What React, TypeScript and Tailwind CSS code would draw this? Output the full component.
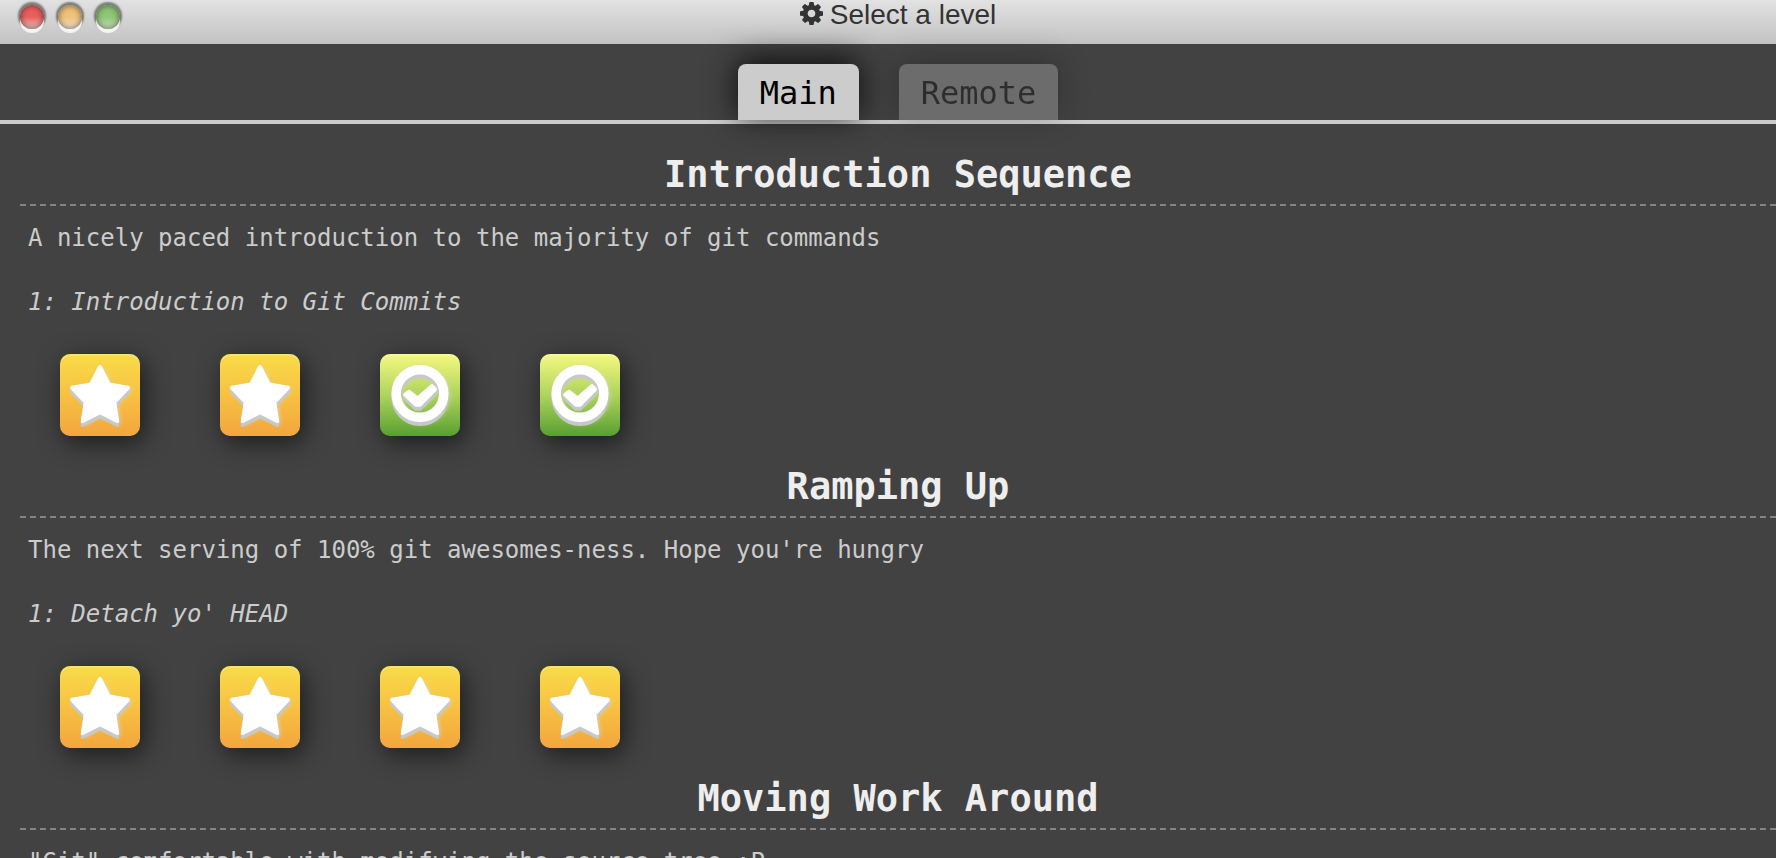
import { useState } from "react";

type Level = { name: string; solved: boolean };
type Sequence = { title: string; about: string; first?: string; levels: Level[] };

const sequences: Sequence[] = [
  {
    title: "Introduction Sequence",
    about: "A nicely paced introduction to the majority of git commands",
    first: "1: Introduction to Git Commits",
    levels: [
      { name: "Level 1", solved: false },
      { name: "Level 2", solved: false },
      { name: "Level 3", solved: true },
      { name: "Level 4", solved: true },
    ],
  },
  {
    title: "Ramping Up",
    about: "The next serving of 100% git awesomes-ness. Hope you're hungry",
    first: "1: Detach yo' HEAD",
    levels: [
      { name: "Level 1", solved: false },
      { name: "Level 2", solved: false },
      { name: "Level 3", solved: false },
      { name: "Level 4", solved: false },
    ],
  },
  {
    title: "Moving Work Around",
    about: '"Git" comfortable with modifying the source tree :P',
    levels: [],
  },
];

function Gear() {
  return (
    <svg viewBox="128 128 1536 1536" className="size-[23px] fill-current" aria-hidden="true">
      <path d="M1152 896q0-106-75-181t-181-75-181 75-75 181 75 181 181 75 181-75 75-181zm512-109v222q0 12-8 23t-20 13l-185 28q-19 54-39 91 35 50 107 138 10 12 10 25t-9 23q-27 37-99 108t-94 71q-12 0-26-9l-138-108q-44 23-91 38-16 136-29 186-7 28-36 28h-222q-14 0-24.5-8.5t-11.5-21.5l-28-184q-49-16-90-37l-141 107q-10 9-25 9-14 0-25-11-126-114-165-168-7-10-7-23 0-12 8-23 15-21 51-66.5t54-70.5q-27-50-41-99l-183-27q-13-2-21-12.5t-8-23.5v-222q0-12 8-23t19-13l186-28q14-46 39-92-40-57-107-138-10-12-10-24 0-10 9-23 26-36 98.5-107.5t94.5-71.5q13 0 26 10l138 107q44-23 91-38 16-136 29-186 7-28 36-28h222q14 0 24.5 8.5t11.5 21.5l28 184q49 16 90 37l142-107q9-9 24-9 13 0 25 10 129 119 165 170 7 8 7 22 0 12-8 23-15 21-51 66.5t-54 70.5q26 50 41 98l183 28q13 2 21 12.5t8 23.5z" />
    </svg>
  );
}

function Star() {
  return (
    <path
      d="M40 13 L49 30.5 L68 33.8 L54.3 48.2 L57.2 67 L40 58.2 L22.8 67 L25.7 48.2 L12 33.8 L31 30.5 Z"
      strokeWidth="4"
      strokeLinejoin="round"
      stroke="currentColor"
      fill="currentColor"
    />
  );
}

function Check() {
  return (
    <>
      <circle cx="40" cy="39.5" r="23.8" strokeWidth="9.5" stroke="currentColor" fill="none" />
      <path
        d="M25.2 40.6 L29 37.8 L37.6 44.6 L52 32 L55 35.3 L40 50.7 L36 50.7 Z"
        strokeWidth="4"
        strokeLinejoin="round"
        stroke="currentColor"
        fill="currentColor"
      />
    </>
  );
}

function Glyph({ solved }: { solved: boolean }) {
  const Shape = solved ? Check : Star;
  return (
    <svg viewBox="0 0 80 82" className="h-full w-full" aria-hidden="true">
      <g className="text-[#d8d8d8]/50 blur-[2px]" transform="translate(2 2)">
        <Shape />
      </g>
      {[4, 3, 2, 1].map((dy) => (
        <g key={dy} className="text-[#c8c8c8]" transform={`translate(0 ${dy})`}>
          <Shape />
        </g>
      ))}
      <g className="text-white">
        <Shape />
      </g>
    </svg>
  );
}

function LevelTile({ level }: { level: Level }) {
  const paint = level.solved
    ? "bg-linear-to-b from-[#f5f881] via-[#aed45b] to-[#57a032]"
    : "bg-linear-to-b from-[#f9dc49] to-[#f3a63c]";
  return (
    <button
      type="button"
      aria-label={level.name}
      className={`h-[82px] w-20 rounded-[10px] shadow-[4px_6px_24px_rgba(0,0,0,0.6),inset_0_2px_1px_rgba(255,255,255,0.2)] ${paint}`}
    >
      <Glyph solved={level.solved} />
    </button>
  );
}

function WindowButton({ label, paint }: { label: string; paint: string }) {
  return (
    <button
      type="button"
      aria-label={label}
      className={`size-6 rounded-full shadow-[0_4px_0_#f4f4f4,0_-1px_2px_2px_rgba(0,0,0,0.45),inset_0_0_6px_rgba(0,0,0,0.55)] ${paint}`}
    />
  );
}

export default function App() {
  const [tab, setTab] = useState("Main");
  return (
    <main className="h-screen overflow-hidden bg-[#424242] font-['DejaVu_Sans_Mono',monospace] text-[#ccc]">
      <header className="grid h-11 grid-cols-[1fr_auto_1fr] bg-linear-to-b from-[#e2e2e2] to-[#c2c2c2] pl-5">
        <div className="flex gap-3.5 pt-[5px]">
          <WindowButton label="Close" paint="bg-linear-to-b from-[#e85f5e] from-50% to-[#e6c4c3]" />
          <WindowButton label="Minimize" paint="bg-linear-to-b from-[#f0c27a] from-50% to-[#f0e2cc]" />
          <WindowButton label="Zoom" paint="bg-linear-to-b from-[#90c675] from-50% to-[#cce0c0]" />
        </div>
        <h1 className="flex items-start gap-[7px] pt-0.5 font-['Liberation_Sans',sans-serif] text-[28px] leading-[26px] text-[#333]">
          <Gear />
          Select a level
        </h1>
      </header>

      <nav className="flex justify-center gap-10 border-b-4 border-[#ccc] pt-5 pl-5">
        {["Main", "Remote"].map((name) => (
          <button
            key={name}
            type="button"
            onClick={() => setTab(name)}
            className={`h-14 rounded-t-lg bg-[#ccc] px-[22px] text-[32px] leading-[58px] text-black shadow-[0_-4px_32px_rgba(0,0,0,0.85)] ${
              tab === name ? "" : "opacity-30"
            }`}
          >
            {name}
          </button>
        ))}
      </nav>

      {sequences.map((s) => (
        <section key={s.title} className="pt-[30px] pl-5">
          <h2 className="border-b-2 border-dashed border-[#858585] pb-2 text-center text-[37px] leading-[42px] font-bold text-[#eee]">
            {s.title}
          </h2>
          <p className="mt-4 pl-2 text-2xl leading-8">{s.about}</p>
          {s.first && <p className="mt-8 pl-2 text-2xl leading-8 italic">{s.first}</p>}
          <div className="mt-9 flex gap-20 pl-10">
            {s.levels.map((l) => (
              <LevelTile key={l.name} level={l} />
            ))}
          </div>
        </section>
      ))}
    </main>
  );
}
